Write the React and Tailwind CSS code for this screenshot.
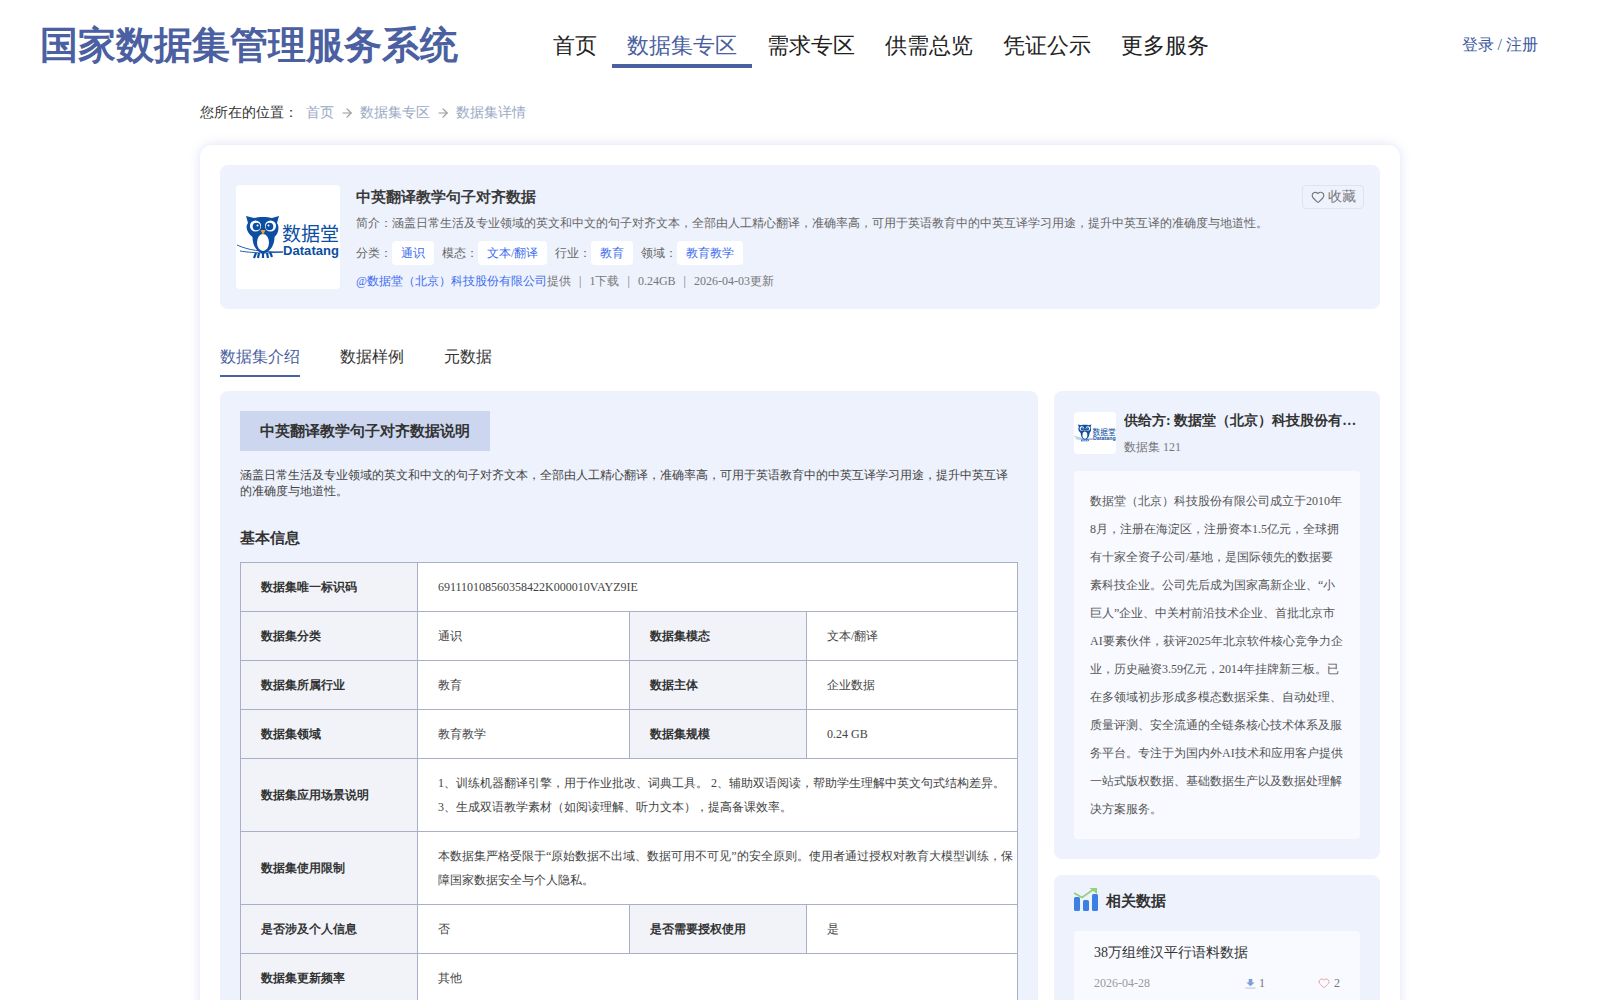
import { ArrowRight, Heart } from "lucide-react";

const navs = ["首页", "数据集专区", "需求专区", "供需总览", "凭证公示", "更多服务"];

const tags = [
  ["分类：", "通识"],
  ["模态：", "文本/翻译"],
  ["行业：", "教育"],
  ["领域：", "教育教学"],
];

const Logo = ({ className }) => (
  <svg viewBox="0 0 104 104" className={className}>
    {/* 树枝 */}
    <path d="M1 60 C12 65 24 67 47 67 L30 68 C20 68 10 67 4 66" fill="none" stroke="#0b4ea2" strokeWidth="0.9" />
    {/* 猫头鹰 */}
    <path
      d="M10 31 L18 33 C22 31.5 32 31.5 36 33 L43 31 L41 38 C44 43 42 49 38.5 52 C38.5 60 35 66 27 69 C20 66 16.5 60 16.5 52 C11 48 9 42 12 38 Z"
      fill="#0b4ea2"
    />
    <path d="M20 68 L18 73 M23 68 L22 73 M27 68 L27 73 M31 68 L32 73 M34 67 L36 72" stroke="#0b4ea2" strokeWidth="2.2" />
    <circle cx="19.5" cy="41" r="5.6" fill="#fff" />
    <circle cx="34.5" cy="41" r="5.6" fill="#fff" />
    <circle cx="20.5" cy="41.5" r="3.8" fill="#0b4ea2" />
    <circle cx="33.5" cy="41.5" r="3.8" fill="#0b4ea2" />
    <circle cx="21.5" cy="40.5" r="1" fill="#fff" />
    <circle cx="32.5" cy="40.5" r="1" fill="#fff" />
    <ellipse cx="27" cy="57.5" rx="6" ry="8.5" fill="#fff" />
    <path d="M24.5 45 L29.5 45 L27 50 Z" fill="#f0a030" />
    <text x="46" y="56" fontSize="19" fill="#0b4ea2" fontFamily="'Noto Sans CJK SC', sans-serif">数据堂</text>
    <text x="47" y="69.5" fontSize="13" fontWeight="700" fill="#0b4ea2" fontFamily="'Liberation Sans', sans-serif" textLength="56">Datatang</text>
  </svg>
);

// 表格单元格
const Th = ({ children }) => (
  <th className="border border-[#a9afc6] bg-[#f1f3f9] px-5 text-left text-xs font-bold text-[#333]">{children}</th>
);
const Td = ({ children, colSpan, pr }) => (
  <td colSpan={colSpan} className={`border border-[#a9afc6] bg-white pl-5 text-xs leading-6 text-[#444] ${pr ? "py-3 pr-1" : "pr-5"}`}>
    {children}
  </td>
);

const Download = () => (
  <svg viewBox="0 0 12 12" className="w-[11px] h-[11px]">
    <path d="M4 1 H8 V5 H10.5 L6 9 L1.5 5 H4 Z" fill="#7f9fd6" />
    <path d="M0.5 11 H11.5" stroke="#a9bde2" strokeWidth="1" />
  </svg>
);

export default function App() {
  return (
    <div className="min-h-screen bg-white font-['Liberation_Serif',serif] text-[#333]">
      {/* 头部 */}
      <header className="flex h-[68px] pl-10 pr-[62px]">
        <h1 className="w-[418px] mt-[22px] text-[38px] leading-[46px] font-bold text-[#4a60a1] whitespace-nowrap">
          国家数据集管理服务系统
        </h1>
        <nav className="flex ml-[80px]">
          {navs.map((n, i) => (
            <div
              key={n}
              className={`px-[15px] pt-[26px] flex items-center text-[22px] border-b-4 ${
                i === 1 ? "text-[#4a60a1] border-[#4a60a1]" : "text-[#222] border-transparent"
              }`}
            >
              {n}
            </div>
          ))}
        </nav>
        <div className="ml-auto mt-[33px] h-6 leading-6 text-base text-[#3c5a9f]">登录 / 注册</div>
      </header>

      <main className="w-[1200px] mx-auto">
        {/* 面包屑 */}
        <div className="flex items-center h-5 mt-[35px] text-sm text-[#9aaac4]">
          <span className="text-[#333] w-[106px]">您所在的位置：</span>
          <span>首页</span>
          <ArrowRight size={14} className="mx-[6px] text-[#999]" />
          <span>数据集专区</span>
          <ArrowRight size={14} className="mx-[6px] text-[#999]" />
          <span>数据集详情</span>
        </div>

        <div className="mt-[22px] rounded-xl bg-white p-5 shadow-[0_0_12px_rgba(90,110,210,0.2)]">
          {/* 数据集概要 */}
          <section className="flex items-start rounded-lg bg-[#eef2fd] pl-4 pr-4 py-5 h-[144px]">
            <div className="w-[104px] h-[104px] rounded bg-white shrink-0">
              <Logo className="w-full h-full" />
            </div>
            <div className="flex-1 ml-4">
              <h2 className="text-[15px] leading-6 font-bold text-[#3a3a3a]">中英翻译教学句子对齐数据</h2>
              <p className="mt-[4px] text-xs leading-5 text-[#666]">
                简介：涵盖日常生活及专业领域的英文和中文的句子对齐文本，全部由人工精心翻译，准确率高，可用于英语教育中的中英互译学习用途，提升中英互译的准确度与地道性。
              </p>
              <div className="flex items-center gap-2 mt-2 text-xs text-[#666]">
                {tags.map(([k, v]) => (
                  <div key={k} className="flex items-center">
                    <span>{k}</span>
                    <span className="h-6 leading-6 px-[9px] rounded bg-white text-[#3d6cf0]">{v}</span>
                  </div>
                ))}
              </div>
              <div className="mt-[6px] text-xs leading-5 text-[#777]">
                <span className="text-[#3d6cf0]">@数据堂（北京）科技股份有限公司</span>提供
                <span className="mx-2">|</span>1下载
                <span className="mx-2">|</span>0.24GB
                <span className="mx-2">|</span>2026-04-03更新
              </div>
            </div>
            <button className="flex items-center justify-center gap-[3px] w-[62px] h-6 rounded border border-[#dfe3ee] text-sm text-[#777]">
              <Heart size={14} />
              收藏
            </button>
          </section>

          {/* 标签页 */}
          <div className="flex gap-10 mt-9 text-base">
            <div className="leading-6 pb-[6px] border-b-2 border-[#4a60a1] text-[#4a60a1]">数据集介绍</div>
            <div className="leading-6 text-[#333]">数据样例</div>
            <div className="leading-6 text-[#333]">元数据</div>
          </div>

          <div className="flex items-start gap-4 mt-[14px]">
            {/* 左侧说明 */}
            <section className="w-[818px] rounded-lg bg-[#eef2fd] p-5">
              <h3 className="inline-block h-10 leading-10 px-5 bg-[#ccd7ef] text-[15px] font-bold text-[#333]">
                中英翻译教学句子对齐数据说明
              </h3>
              <p className="mt-4 text-xs leading-4 text-[#444]">
                涵盖日常生活及专业领域的英文和中文的句子对齐文本，全部由人工精心翻译，准确率高，可用于英语教育中的中英互译学习用途，提升中英互译的准确度与地道性。
              </p>
              <h4 className="mt-[29px] mb-[14px] text-[15px] leading-5 font-bold text-[#333]">基本信息</h4>
              <table className="w-[777px] table-fixed border-collapse">
                <colgroup>
                  <col className="w-[177px]" />
                  <col className="w-[212px]" />
                  <col className="w-[177px]" />
                  <col className="w-[211px]" />
                </colgroup>
                <tbody>
                  <tr className="h-[49px]"><Th>数据集唯一标识码</Th><Td colSpan={3}>691110108560358422K000010VAYZ9IE</Td></tr>
                  <tr className="h-[49px]"><Th>数据集分类</Th><Td>通识</Td><Th>数据集模态</Th><Td>文本/翻译</Td></tr>
                  <tr className="h-[49px]"><Th>数据集所属行业</Th><Td>教育</Td><Th>数据主体</Th><Td>企业数据</Td></tr>
                  <tr className="h-[49px]"><Th>数据集领域</Th><Td>教育教学</Td><Th>数据集规模</Th><Td>0.24 GB</Td></tr>
                  <tr>
                    <Th>数据集应用场景说明</Th>
                    <Td colSpan={3} pr>1、训练机器翻译引擎，用于作业批改、词典工具。 2、辅助双语阅读，帮助学生理解中英文句式结构差异。 3、生成双语教学素材（如阅读理解、听力文本），提高备课效率。</Td>
                  </tr>
                  <tr>
                    <Th>数据集使用限制</Th>
                    <Td colSpan={3} pr>本数据集严格受限于“原始数据不出域、数据可用不可见”的安全原则。使用者通过授权对教育大模型训练，保障国家数据安全与个人隐私。</Td>
                  </tr>
                  <tr className="h-[49px]"><Th>是否涉及个人信息</Th><Td>否</Td><Th>是否需要授权使用</Th><Td>是</Td></tr>
                  <tr className="h-[49px]"><Th>数据集更新频率</Th><Td colSpan={3}>其他</Td></tr>
                </tbody>
              </table>
            </section>

            {/* 右侧栏 */}
            <aside className="w-[326px] flex flex-col gap-4">
              <section className="rounded-lg bg-[#eef2fd] p-5">
                <div className="flex gap-2">
                  <div className="w-[42px] h-[42px] mt-px rounded bg-white shrink-0">
                    <Logo className="w-full h-full" />
                  </div>
                  <div className="min-w-0 flex-1">
                    <div className="truncate mt-px text-sm leading-[18px] font-bold text-[#333]">供给方: 数据堂（北京）科技股份有限公司</div>
                    <div className="mt-[9px] text-xs leading-4 text-[#777]">数据集 121</div>
                  </div>
                </div>
                <p className="mt-4 rounded bg-[#f8faff] p-4 text-xs leading-7 text-[#555]">
                  数据堂（北京）科技股份有限公司成立于2010年8月，注册在海淀区，注册资本1.5亿元，全球拥有十家全资子公司/基地，是国际领先的数据要素科技企业。公司先后成为国家高新企业、“小巨人”企业、中关村前沿技术企业、首批北京市AI要素伙伴，获评2025年北京软件核心竞争力企业，历史融资3.59亿元，2014年挂牌新三板。已在多领域初步形成多模态数据采集、自动处理、质量评测、安全流通的全链条核心技术体系及服务平台。专注于为国内外AI技术和应用客户提供一站式版权数据、基础数据生产以及数据处理解决方案服务。
                </p>
              </section>

              <section className="rounded-lg bg-[#eef2fd] p-5 pt-[12px]">
                <div className="flex items-center gap-2 h-6">
                  <svg viewBox="0 0 24 24" className="w-6 h-6 shrink-0">
                    <path d="M0 6 L8 10.5 L20 2" fill="none" stroke="#92d07a" strokeWidth="1.6" />
                    <path d="M15.5 1 H23 V7 Z" fill="#92d07a" />
                    <rect x="0" y="10" width="6" height="14" rx="1.5" fill="#3b80e2" />
                    <rect x="9" y="13" width="6" height="11" rx="1.5" fill="#3b80e2" />
                    <rect x="18" y="7" width="6" height="17" rx="1.5" fill="#3b80e2" />
                  </svg>
                  <h3 className="mt-1 text-[15px] font-bold text-[#333]">相关数据</h3>
                </div>
                <div className="mt-5 rounded bg-[#f8faff] px-5 pt-3 pb-3">
                  <div className="text-sm leading-5 text-[#333]">38万组维汉平行语料数据</div>
                  <div className="flex items-center mt-[10px] text-xs leading-5 text-[#999]">
                    <span>2026-04-28</span>
                    <span className="ml-auto flex items-center gap-[3px] text-[#777]"><Download />1</span>
                    <span className="ml-[53px] flex items-center gap-1 text-[#777]"><Heart size={12} className="text-[#f0a0a0]" />2</span>
                  </div>
                </div>
              </section>
            </aside>
          </div>
        </div>
      </main>
    </div>
  );
}
